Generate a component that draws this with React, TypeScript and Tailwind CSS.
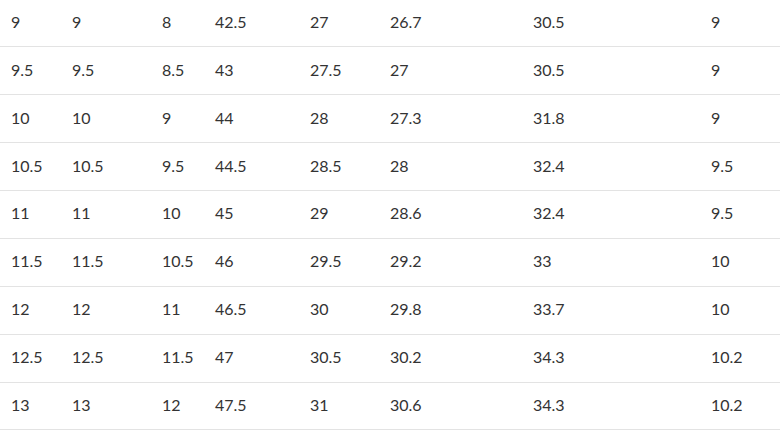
const rows: string[][] = [
  ["9", "9", "8", "42.5", "27", "26.7", "30.5", "9"],
  ["9.5", "9.5", "8.5", "43", "27.5", "27", "30.5", "9"],
  ["10", "10", "9", "44", "28", "27.3", "31.8", "9"],
  ["10.5", "10.5", "9.5", "44.5", "28.5", "28", "32.4", "9.5"],
  ["11", "11", "10", "45", "29", "28.6", "32.4", "9.5"],
  ["11.5", "11.5", "10.5", "46", "29.5", "29.2", "33", "10"],
  ["12", "12", "11", "46.5", "30", "29.8", "33.7", "10"],
  ["12.5", "12.5", "11.5", "47", "30.5", "30.2", "34.3", "10.2"],
  ["13", "13", "12", "47.5", "31", "30.6", "34.3", "10.2"],
];

export default function App() {
  return (
    <div className="h-[431px] w-[780px] overflow-hidden bg-white font-['Lato',sans-serif] text-[16px] text-[#333]">
      <div className="-mt-[0.5px] flex flex-col">
        {rows.map((row, i) => (
          <div
            key={i}
            className="grid h-[47.875px] grid-cols-[61px_90px_53px_95px_80px_143px_178px_1fr] items-center border-b border-[#e3e3e3] pb-[2px]"
          >
            {row.map((cell, j) => (
              <div key={j} className="pl-[11px]">
                {cell}
              </div>
            ))}
          </div>
        ))}
      </div>
    </div>
  );
}
